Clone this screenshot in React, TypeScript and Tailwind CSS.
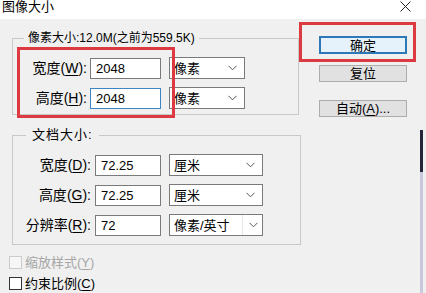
import React from "react";

const font = { fontFamily: '"Liberation Sans", "Noto Sans CJK SC", sans-serif' };

function Chevron() {
  return (
    <svg width="9" height="6" viewBox="0 0 9 6" className="shrink-0">
      <path d="M0.5 0.8 L4.5 4.8 L8.5 0.8" fill="none" stroke="#555" strokeWidth="1" />
    </svg>
  );
}

function U({ c }: { c: string }) {
  return <span className="underline underline-offset-2 decoration-1">{c}</span>;
}

function Select({ text, w, split }: { text: string; w: string; split?: boolean }) {
  return (
    <div className={`${w} h-[22px] bg-white border border-[#7a7a7a] flex items-center pl-[4px] pr-[7px] text-[13px] leading-none text-black`}>
      <span className="flex-1 overflow-hidden whitespace-nowrap">{text}</span>
      {split ? (
        <div className="h-full border-l border-[#e6e6e6] pl-[6px] -mr-[3px] w-[16px] flex items-center">
          <Chevron />
        </div>
      ) : (
        <Chevron />
      )}
    </div>
  );
}

function Input({ value, w, focus }: { value: string; w: string; focus?: boolean }) {
  return (
    <div
      className={`${w} h-[21px] bg-white border ${focus ? "border-[#3d86c4]" : "border-[#7a7a7a]"} flex items-center pl-[5px] text-[13px] leading-none text-black`}
    >
      {value}
    </div>
  );
}

function Row({
  label,
  k,
  value,
  lw,
  iw,
  sel,
  sw,
  focus,
  split,
}: {
  label: string;
  k: string;
  value: string;
  lw: string;
  iw: string;
  sel: string;
  sw: string;
  focus?: boolean;
  split?: boolean;
}) {
  return (
    <div className="flex items-center h-[22px]">
      <div className={`${lw} text-right text-[14px] leading-none text-black whitespace-nowrap`}>
        {label}(<U c={k} />):
      </div>
      <Input value={value} w={iw} focus={focus} />
      <div className="w-[8px]" />
      <Select text={sel} w={sw} split={split} />
    </div>
  );
}

function Button({ children, primary }: { children: React.ReactNode; primary?: boolean }) {
  return (
    <div
      className={`w-[88px] flex items-center justify-center text-[13px] leading-none text-black ${
        primary ? "h-[18px] border-2 border-[#2f78b8] bg-[#e5f1fb]" : "h-[17px] border border-[#adadad] bg-[#e1e1e1]"
      }`}
    >
      {children}
    </div>
  );
}

export default function App() {
  return (
    <div style={font} className="relative w-[426px] h-[293px] overflow-hidden bg-[#f0f0f0] select-none">
      {/* title bar */}
      <div className="h-[19px] bg-white flex items-start justify-between">
        <div className="pl-[2px] -mt-[1px] text-[13px] leading-[15px] text-black">图像大小</div>
        <svg width="11" height="11" viewBox="0 0 11 11" className="mt-[1px] mr-[15px]">
          <path d="M0.5 0.5 L10.5 10.5 M10.5 0.5 L0.5 10.5" stroke="#222" strokeWidth="1" />
        </svg>
      </div>

      <div className="flex">
        {/* left column */}
        <div className="flex flex-col pl-[12px] w-[301px] shrink-0">
          <fieldset className="mt-[11px] border border-[#c8c8c8] w-[287px] pb-[5px]">
            <legend className="ml-[11px] px-[4px] text-[12px] leading-[16px] text-black whitespace-nowrap">
              像素大小:12.0M(之前为559.5K)
            </legend>
            <div className="mt-[11px] flex flex-col gap-[8px]">
              <Row label="宽度" k="W" value="2048" lw="w-[77px] pr-[3px]" iw="w-[71px]" sel="像素" sw="w-[76px]" />
              <Row label="高度" k="H" value="2048" lw="w-[77px] pr-[3px]" iw="w-[71px]" sel="像素" sw="w-[76px]" focus />
            </div>
          </fieldset>

          <fieldset className="mt-[12px] border border-[#c8c8c8] w-[289px] pb-[8px]">
            <legend className="ml-[13px] px-[6px] text-[13px] tracking-[1px] leading-[16px] text-black">文档大小:</legend>
            <div className="mt-[11px] flex flex-col gap-[8px]">
              <Row label="宽度" k="D" value="72.25" lw="w-[82px] pr-[4px]" iw="w-[66px]" sel="厘米" sw="w-[94px]" />
              <Row label="高度" k="G" value="72.25" lw="w-[82px] pr-[4px]" iw="w-[66px]" sel="厘米" sw="w-[94px]" />
              <Row label="分辨率" k="R" value="72" lw="w-[82px] pr-[4px]" iw="w-[66px]" sel="像素/英寸" sw="w-[94px]" split />
            </div>
          </fieldset>

          <div className="-ml-[3px] mt-[10px] flex flex-col gap-[7px]">
            <div className="flex items-center h-[14px] gap-[3px] text-[13px] leading-none text-[#a6a6a6]">
              <div className="w-[13px] h-[13px] border border-[#cccccc] bg-[#f6f6f6]" />
              <span>
                缩放样式(<U c="Y" />)
              </span>
            </div>
            <div className="flex items-center h-[14px] gap-[3px] text-[13px] leading-none text-black">
              <div className="w-[13px] h-[13px] border border-[#333] bg-white" />
              <span>
                约束比例(<U c="C" />)
              </span>
            </div>
          </div>
        </div>

        {/* right column */}
        <div className="flex flex-col pl-[18px] pt-[17px] w-[106px] shrink-0">
          <Button primary>确定</Button>
          <div className="mt-[11px]">
            <Button>复位</Button>
          </div>
          <div className="mt-[18px]">
            <Button>
              自动(<U c="A" />)...
            </Button>
          </div>
        </div>

        {/* edge strip */}
        <div className="ml-[13px] w-[3px] flex flex-col pt-[111px] shrink-0">
          <div className="h-[42px] bg-[#25253a]" />
          <div className="h-[130px] bg-[#c9c7dc]" />
        </div>
      </div>

      {/* red highlight boxes */}
      <div className="absolute left-[17px] top-[47px] w-[158px] h-[71px] border-[3px] border-[#dc3a40]" />
      <div className="absolute left-[299px] top-[22px] w-[117px] h-[40px] border-[3px] border-[#dc3a40]" />
    </div>
  );
}
